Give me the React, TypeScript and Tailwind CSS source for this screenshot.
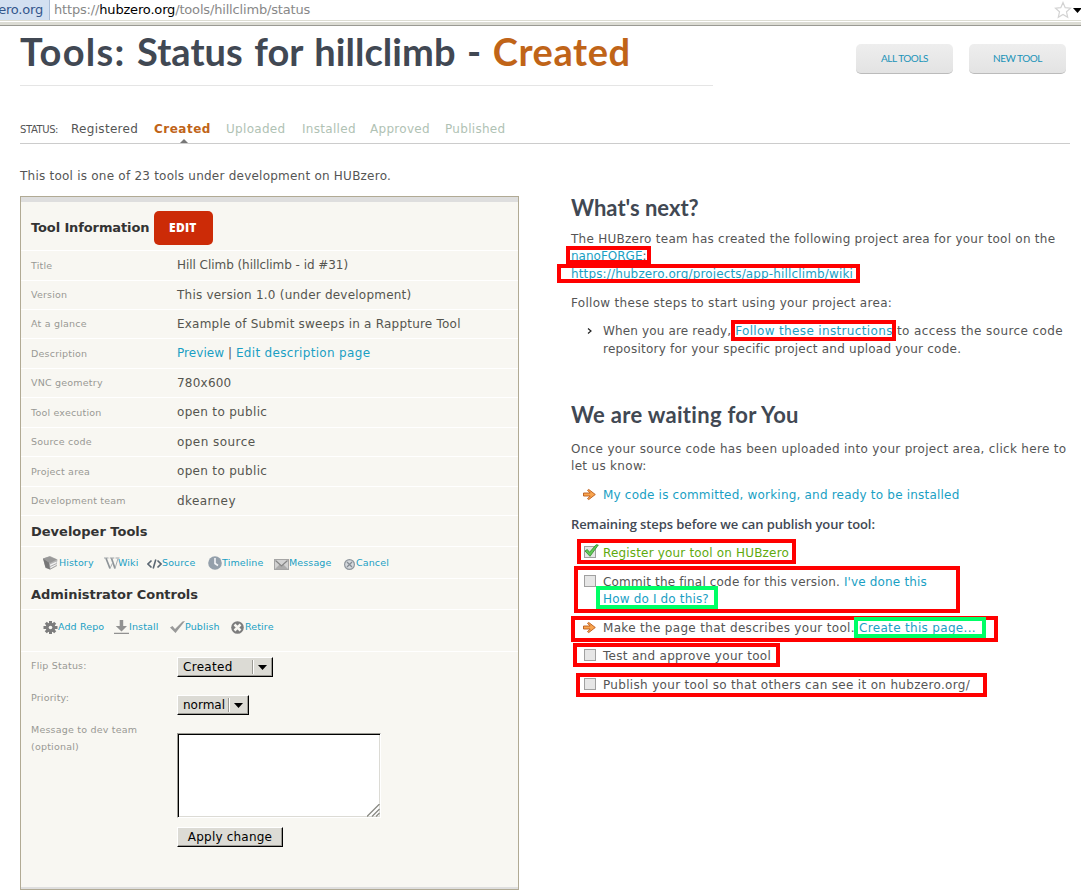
import type { ReactNode } from "react";

const LINK = "text-[#1a9fc4]";

function Line({ h, className = "", children }: { h: string; className?: string; children: ReactNode }) {
  return <div className={`flex items-center border-b border-white whitespace-nowrap ${h} ${className}`}>{children}</div>;
}

function InfoRow({ label, h, track = "tracking-[0.22px]", children }: { label: string; h: string; track?: string; children: ReactNode }) {
  return (
    <Line h={h} className="pl-[10px]">
      <div className="w-[146px] shrink-0 pb-[1px] text-[9.5px] leading-[15px] tracking-[0.2px] text-[#999994]">{label}</div>
      <div className={`text-[12px] leading-[17px] text-[#55554f] ${track}`}>{children}</div>
    </Line>
  );
}

function Tool({ w, gap, icon, label }: { w: string; gap: string; icon: ReactNode; label: string }) {
  return (
    <div className={`flex items-start ${w}`}>
      <span className={`mt-[2px] block h-[16px] shrink-0 ${gap}`}>{icon}</span>
      <span className={`mt-[2px] text-[9.5px] leading-[14px] tracking-[0.12px] ${LINK}`}>{label}</span>
    </div>
  );
}

const HistoryIcon = () => (
  <svg width="15" height="15" viewBox="0 0 15 15">
    <path d="M0 2.500 7 0l7.500 3.500-1 6L7 13.500 2.500 12z" fill="#b5b5b5" />
    <path d="M0 2.500 6.500 0.500 14 3.500 7 7z" fill="#999" />
    <path d="M0 2.500 6 6.500 7 13.500 2.500 11.500z" fill="#777" />
    <path d="M7 8.500 13.500 5.500V9L7.500 12.500z" fill="#f2f2f2" />
    <path d="M7.200 10.500 13.500 7.500M7 13.300 14 9.500" stroke="#999" strokeWidth=".8" />
  </svg>
);
const WikiIcon = () => (
  <svg width="16" height="15" viewBox="0 0 16 15" fill="none">
    <path d="M0 2h4.500M5.800 2h4.500M11.500 2H15.500" stroke="#a0a5a8" />
    <path d="M2 2.300 6 12.500M7.500 2.300 11 12.500" stroke="#8e9498" strokeWidth="1.700" />
    <path d="M6 12.500 9 6M11 12.500 14 2.500" stroke="#a8adb0" />
  </svg>
);
const SourceIcon = () => (
  <svg width="15" height="15" viewBox="0 0 15 15" fill="none" stroke="#5b6772" strokeWidth="1.600">
    <path d="M4.500 4.500 1 8l3.500 3.500M10.500 4.500 14 8l-3.500 3.500M8.800 3.500 6.200 12.500" />
  </svg>
);
const TimelineIcon = () => (
  <svg width="14" height="14" viewBox="0 0 14 14">
    <circle cx="7" cy="7" r="6.800" fill="#94a0ab" />
    <path d="M7 2v5.500l3 2" stroke="#f4f6f8" strokeWidth="1.600" fill="none" />
  </svg>
);
const MessageIcon = () => (
  <svg width="15" height="15" viewBox="0 0 15 15">
    <rect x="0.500" y="3.500" width="14" height="10" fill="#d2d2d2" stroke="#a5a5a5" />
    <path d="M1 13 5.500 8.500 7.500 10.500 9.500 8.500 14 13z" fill="#acacac" />
    <path d="M1.500 4.500 7.500 10 13.500 4.500" stroke="#858585" fill="none" strokeWidth="1.200" />
  </svg>
);
const CancelIcon = () => (
  <svg width="11" height="15" viewBox="0 0 11 15">
    <circle cx="5.500" cy="8.500" r="4.900" fill="#d5d9dd" stroke="#8f969d" strokeWidth="1.200" />
    <path d="M3 6l5 5M8 6l-5 5" stroke="#858c94" strokeWidth="1.300" />
  </svg>
);
const GearIcon = () => (
  <svg width="15" height="15" viewBox="0 0 15 15">
    <g stroke="#7d7d7d" strokeWidth="3">
      <path d="M7.500 1v13M0.500 7.500h14M2.800 2.800l9.400 9.400M12.200 2.800l-9.400 9.400" />
    </g>
    <circle cx="7.500" cy="7.500" r="4.800" fill="#7d7d7d" />
    <circle cx="7.500" cy="7.500" r="1.800" fill="#f7f6f1" />
  </svg>
);
const InstallIcon = () => (
  <svg width="15" height="15" viewBox="0 0 15 15" fill="#919191">
    <path d="M5.700 0h3.500v6H13l-5.500 5.500L1.800 6h3.900zM0 12.800h15V14H0z" />
  </svg>
);
const PublishIcon = () => (
  <svg width="15" height="15" viewBox="0 0 15 15">
    <path d="M0 7.500 2.500 6 5 9 12.500 1.500 15 1 5.500 13z" fill="#999" />
  </svg>
);
const RetireIcon = () => (
  <svg width="13" height="14" viewBox="0 0 13 14">
    <circle cx="6.500" cy="7.500" r="6.300" fill="#7d7d7d" />
    <path d="M3.500 4.500l6 6M9.500 4.500l-6 6" stroke="#f7f6f1" strokeWidth="2.500" />
  </svg>
);
const ArrowIcon = () => (
  <svg width="13" height="15" viewBox="0 -3 13 15">
    <path d="M0.500 4h6.700L4.500 1.300 5.800 0.500 12.300 5.500 5.800 10.500 4.500 9.700 7.200 7H0.500z" fill="#f9a54f" stroke="#b85a1a" strokeWidth=".9" />
  </svg>
);
const Box = ({ checked = false }: { checked?: boolean }) => (
  <svg width="16" height="14" viewBox="0 0 16 14">
    <rect x="1.500" y="2.500" width="11" height="11" fill="#e6e6e6" stroke="#a0a0a0" />
    {checked && <path d="M2 7 4.300 5.500 6.500 8.300 13 0.800 15.300 1 7 12.300z" fill="#62c957" stroke="#2d8a2b" strokeWidth=".8" />}
  </svg>
);

function Select({ label, w, track }: { label: string; w: string; track: string }) {
  return (
    <button className={`flex h-5 items-center border border-t-white border-l-white border-r-black border-b-black bg-[#dcdbd5] pl-[5px] text-[12px] text-black shadow-[inset_-1px_-1px_0_#9b9a94] ${w}`}>
      <span className={`flex-1 text-left ${track}`}>{label}</span>
      <span className="h-[14px] w-[2px] border-l border-r border-l-[#9b9a94] border-r-white" />
      <svg className="mr-[5px] ml-[4px]" width="9" height="5" viewBox="0 0 9 5"><path d="M0 0h9L4.500 5z" /></svg>
    </button>
  );
}

function Step({ icon, children, className = "" }: { icon: ReactNode; children: ReactNode; className?: string }) {
  return (
    <li className={`flex ${className}`}>
      <span className="flex h-[12px] w-[20px] shrink-0 items-center">{icon}</span>
      <span>{children}</span>
    </li>
  );
}

const marks = [
  "left-[566px] top-[246px] h-[18px] w-[85px] border-[#ff0000]",
  "left-[557px] top-[264px] h-[19px] w-[303px] border-[#ff0000]",
  "left-[731px] top-[320px] h-[21px] w-[165px] border-[#ff0000]",
  "left-[577px] top-[539px] h-[25px] w-[219px] border-[#ff0000]",
  "left-[574px] top-[566px] h-[47px] w-[386px] border-[#ff0000]",
  "left-[596px] top-[586px] h-[23px] w-[122px] border-[#00ff66]",
  "left-[571px] top-[616px] h-[26px] w-[427px] border-[#ff0000]",
  "left-[854px] top-[617px] h-[21px] w-[132px] border-[#00ff66]",
  "left-[573px] top-[643px] h-[24px] w-[207px] border-[#ff0000]",
  "left-[576px] top-[673px] h-[24px] w-[411px] border-[#ff0000]",
];

const pending = [
  { name: "Uploaded", w: "w-[76px]" },
  { name: "Installed", w: "w-[68px]" },
  { name: "Approved", w: "w-[75px]" },
  { name: "Published", w: "w-[70px]" },
];

export default function App() {
  return (
    <div className="relative h-[895px] w-[1081px] overflow-hidden bg-white font-['DejaVu_Sans',sans-serif] text-[12px] whitespace-nowrap text-[#555]">
      <div className="flex h-[20px] items-center">
        <div className="flex h-full w-[50px] items-center justify-end border-r border-[#a9bcd6] bg-[#d3e0f1] pr-[6px] text-[13px] tracking-[-0.2px] text-[#33568c]">
          ero.org
        </div>
        <div className="pl-[4px] text-[13px] tracking-[-0.17px] text-[#888]">
          https://<span className="text-black">hubzero.org</span>/tools/hillclimb/status
        </div>
        <div className="ml-auto flex items-center">
          <svg width="18" height="18" viewBox="0 0 18 18"><path d="M9 1.500 11.200 6.700 16.500 7.200 12.500 10.800 13.700 16.300 9 13.500 4.300 16.300 5.500 10.800 1.500 7.200 6.800 6.700z" fill="#fff" stroke="#d3d3d3" strokeWidth="1.200" /></svg>
          <svg className="ml-[1px]" width="8" height="5" viewBox="0 0 8 5"><path d="M0 0h8v1L4.500 5z" /></svg>
        </div>
      </div>
      <div className="h-[2px] border-t border-[#dcdcd2]" />
      <div className="h-[4px] border-b border-[#9a9a93] bg-[#dcdcd4]" />

      <header className="flex h-[60px] pl-[20px]">
        <h1 className="h-full w-[693px] border-b border-[#e5e5e5] font-['Lato',sans-serif] text-[38px] leading-[51px] font-bold tracking-[0.05px] [word-spacing:2.2px] text-[#414853]">
          <span className="tracking-[1.3px]">Tools:</span> Status for hillclimb - <span className="tracking-[0.6px] text-[#c06418]">Created</span>
        </h1>
        <div className="ml-[143px] flex gap-4 pt-[18px] font-['Lato',sans-serif] text-[10px] tracking-[-0.45px] [word-spacing:1px]">
          {["ALL TOOLS", "NEW TOOL"].map((t) => (
            <button key={t} className="h-[30px] w-[97px] rounded-[5px] border-b border-[#bbb] bg-linear-to-b from-[#eeeeee] to-[#e3e3e3] text-[#1a93b8]">{t}</button>
          ))}
        </div>
      </header>

      <nav className="mt-[28px] ml-[20px] flex h-[30px] w-[1050px] border-b border-[#ccc] leading-[31px] tracking-[0.3px]">
        <span className="w-[51px] text-[10px] tracking-[-0.4px]">STATUS:</span>
        <span className="w-[83px]">Registered</span>
        <span className="relative w-[72px] font-bold tracking-[0.5px] text-[#c06418]">
          Created
          <svg className="absolute top-[25px] left-[26px]" width="8" height="4" viewBox="0 0 8 4"><path d="M4 0 8 4H0z" fill="#777" /></svg>
        </span>
        {pending.map((p) => (
          <span key={p.name} className={`text-[#b0c2b4] ${p.w}`}>{p.name}</span>
        ))}
      </nav>

      <p className="mt-[23px] ml-[20px] h-[29px] leading-[18px] tracking-[0.23px]">This tool is one of 23 tools under development on HUBzero.</p>

      <main className="flex pl-[20px]">
        <section className="h-[694px] w-[499px] border border-[#b1aa94] bg-[#f8f7f2]">
          <div className="h-[5px] bg-[#dedede]" />
          <Line h="h-[49px]" className="pt-[4px] pl-[10px] text-[13px] font-bold tracking-[-0.12px] text-[#333]">
            Tool Information
            <button className="ml-[5px] h-[34px] w-[59px] rounded-[5px] bg-[#cc2b07] pr-[2px] font-['Open_Sans',sans-serif] text-[12px] font-extrabold tracking-[0.2px] text-white">EDIT</button>
          </Line>
          <InfoRow label="Title" h="h-[30px]" track="tracking-[-0.05px]">Hill Climb (hillclimb - id #31)</InfoRow>
          <InfoRow label="Version" h="h-[29px]">This version 1.0 (under development)</InfoRow>
          <InfoRow label="At a glance" h="h-[29px]">Example of Submit sweeps in a Rappture Tool</InfoRow>
          <InfoRow label="Description" h="h-[30px]" track="tracking-[0.05px]">
            <a className={LINK}>Preview</a> | <a className={`tracking-[0.33px] ${LINK}`}>Edit description page</a>
          </InfoRow>
          <InfoRow label="VNC geometry" h="h-[29px]">780x600</InfoRow>
          <InfoRow label="Tool execution" h="h-[30px]" track="tracking-[0.32px]">open to public</InfoRow>
          <InfoRow label="Source code" h="h-[29px]" track="tracking-[0.45px]">open source</InfoRow>
          <InfoRow label="Project area" h="h-[30px]" track="tracking-[0.32px]">open to public</InfoRow>
          <InfoRow label="Development team" h="h-[29px]" track="tracking-[0.4px]">dkearney</InfoRow>
          <Line h="h-[31px]" className="pt-[2px] pl-[10px] text-[13px] font-bold text-[#333]">Developer Tools</Line>
          <Line h="h-[32px]" className="pl-[22px]">
            <Tool w="w-[61px]" gap="w-[16px]" icon={<HistoryIcon />} label="History" />
            <Tool w="w-[43px]" gap="w-[14px]" icon={<WikiIcon />} label="Wiki" />
            <Tool w="w-[61px]" gap="w-[15px]" icon={<SourceIcon />} label="Source" />
            <Tool w="w-[66px]" gap="w-[14px]" icon={<TimelineIcon />} label="Timeline" />
            <Tool w="w-[70px]" gap="w-[15px]" icon={<MessageIcon />} label="Message" />
            <Tool w="w-[60px]" gap="w-[12px]" icon={<CancelIcon />} label="Cancel" />
          </Line>
          <Line h="h-[31px]" className="pt-[2px] pl-[10px] text-[13px] font-bold tracking-[-0.04px] text-[#333]">Administrator Controls</Line>
          <Line h="h-[42px]" className="pb-[8px] pl-[22px]">
            <Tool w="w-[71px]" gap="w-[15px]" icon={<GearIcon />} label="Add Repo" />
            <Tool w="w-[56px]" gap="w-[15px]" icon={<InstallIcon />} label="Install" />
            <Tool w="w-[61px]" gap="w-[15px]" icon={<PublishIcon />} label="Publish" />
            <Tool w="w-[60px]" gap="w-[14px]" icon={<RetireIcon />} label="Retire" />
          </Line>
          <div className="flex h-[235px] pl-[10px]">
            <div className="w-[146px] pt-[5px] text-[9.5px] leading-[17px] tracking-[0.2px] text-[#999994]">
              <div className="h-[32px]">Flip Status:</div>
              <div className="h-[32px]">Priority:</div>
              <div>Message to dev team<br />(optional)</div>
            </div>
            <div className="pt-[5px]">
              <Select label="Created" w="w-[96px]" track="tracking-[0.3px]" />
              <div className="h-[18px]" />
              <Select label="normal" w="w-[72px]" track="tracking-normal" />
              <div className="mt-[18px] flex h-[85px] w-[204px] items-end justify-end border border-t-[#9b9a94] border-r-white border-b-white border-l-[#9b9a94] bg-white shadow-[inset_1px_1px_0_#000,inset_-1px_-1px_0_#dcdbd5]">
                <svg width="13" height="13" viewBox="0 0 13 13" stroke="#8a8a84" strokeWidth="1.300"><path d="M0 12.500 12.500 0M5 12.500 12.500 5M9 12.500 12.500 9" /></svg>
              </div>
              <button className="mt-[9px] block h-[20px] w-[106px] border border-t-white border-r-black border-b-black border-l-white bg-[#dcdbd5] leading-[18px] tracking-[0.2px] text-black shadow-[inset_-1px_-1px_0_#9b9a94]">Apply change</button>
            </div>
          </div>
          <div className="h-[2px] bg-[#dedede]" />
        </section>

        <section className="ml-[52px] leading-[17.500px] tracking-[0.3px]">
          <h2 className="h-[35px] font-['Lato',sans-serif] text-[22px] leading-[24px] font-bold tracking-normal text-[#414853]">What's next?</h2>
          <div className="h-[64px]">
            <p className="h-[17px] leading-[17px] tracking-[0.26px]">The HUBzero team has created the following project area for your tool on the</p>
            <p className="h-[18px] leading-[17px] tracking-normal"><a className={LINK}>nanoFORGE</a>:</p>
            <p><a className={`tracking-[0.14px] ${LINK}`}>https://hubzero.org/projects/app-hillclimb/wiki</a></p>
          </div>
          <p className="h-[28px]">Follow these steps to start using your project area:</p>
          <div className="flex h-[80px] pl-[16px]">
            <svg className="mt-[5px] w-[16px]" width="16" height="7" viewBox="0 0 16 7"><path d="M1 0.500 4 3 1 5.500" stroke="#222" fill="none" strokeWidth="1.200" /></svg>
            <p>
              <span className="tracking-[0.15px]">When you are ready, </span><a className={`tracking-[0.35px] ${LINK}`}>Follow these instructions</a> <span className="tracking-[0.4px]">to access the source code</span><br />
              <span className="tracking-[0.23px]">repository for your specific project and upload your code.</span>
            </p>
          </div>
          <h2 className="h-[38px] font-['Lato',sans-serif] text-[22px] leading-[24px] font-bold tracking-[0.3px] text-[#414853]">We are waiting for You</h2>
          <p className="h-[46px] leading-[17px] tracking-[0.31px]">Once your source code has been uploaded into your project area, click here to<br />let us know:</p>
          <ul className="pl-[12px]">
            <Step className="h-[29px]" icon={<ArrowIcon />}><a className={`tracking-[0.2px] ${LINK}`}>My code is committed, working, and ready to be installed</a></Step>
          </ul>
          <h3 className="h-[29px] font-['Open_Sans',sans-serif] text-[13px] font-semibold tracking-[-0.1px] text-[#414853]">Remaining steps before we can publish your tool:</h3>
          <ul className="pl-[12px]">
            <Step className="h-[29px] tracking-[0.17px]" icon={<Box checked />}><span className="text-[#5faa0e]">Register your tool on HUBzero</span></Step>
            <Step className="h-[46px] leading-[17px] tracking-[0.16px]" icon={<Box />}>
              Commit the final code for this version. <a className={LINK}>I've done this</a><br />
              <a className={LINK}>How do I do this?</a>
            </Step>
            <Step className="h-[28px] tracking-[0.32px]" icon={<ArrowIcon />}>Make the page that describes your tool. <a className={LINK}>Create this page...</a></Step>
            <Step className="h-[29px]" icon={<Box />}>Test and approve your tool</Step>
            <Step className="tracking-[0.32px]" icon={<Box />}>Publish your tool so that others can see it on hubzero.org/</Step>
          </ul>
        </section>
      </main>

      {marks.map((m) => (
        <div key={m} className={`pointer-events-none absolute border-4 ${m}`} />
      ))}
    </div>
  );
}
